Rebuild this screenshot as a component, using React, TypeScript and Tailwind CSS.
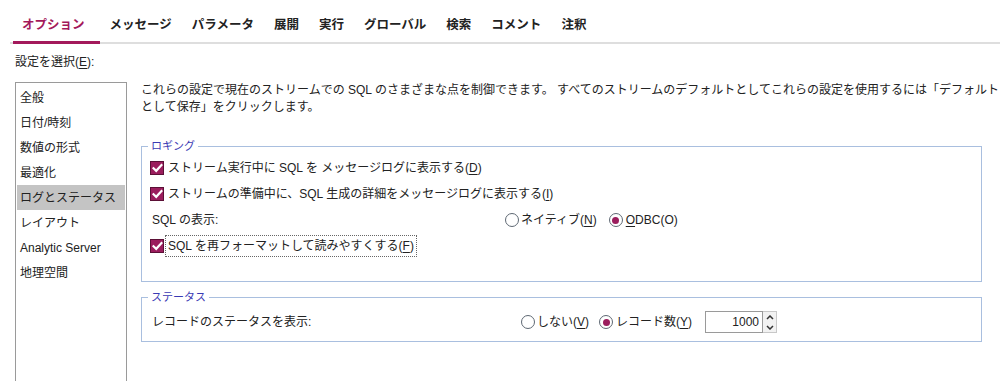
import React from 'react';

const FONT = '"Liberation Sans", "Noto Sans CJK JP", sans-serif';

const tabs = ['オプション', 'メッセージ', 'パラメータ', '展開', '実行', 'グローバル', '検索', 'コメント', '注釈'];

const categories = ['全般', '日付/時刻', '数値の形式', '最適化', 'ログとステータス', 'レイアウト', 'Analytic Server', '地理空間'];

function CheckBox() {
  return (
    <span className="flex h-[14px] w-[14px] shrink-0 items-center justify-center border border-[#5b1036] bg-[#9b1d5d]">
      <svg width="11" height="10" viewBox="0 0 11 10">
        <path d="M1.5 5.2 L4.2 7.8 L9.5 2" fill="none" stroke="white" strokeWidth="2.2" strokeLinecap="square" />
      </svg>
    </span>
  );
}

function Radio({ checked }: { checked?: boolean }) {
  return (
    <span className="flex h-[14px] w-[14px] shrink-0 items-center justify-center rounded-full border border-[#5e6873] bg-white">
      {checked && <span className="h-[7px] w-[7px] rounded-full bg-[#9b1d5d]" />}
    </span>
  );
}

// text with an underlined access key
function Key({ before, k, after }: { before?: string; k: string; after?: string }) {
  return (
    <span>
      {before}
      <span className="underline underline-offset-2">{k}</span>
      {after}
    </span>
  );
}

function Legend({ className, children }: { className?: string; children: React.ReactNode }) {
  return <legend className={`px-[3px] text-[11px] leading-[14px] text-[#3a3ab4] ${className ?? ''}`}>{children}</legend>;
}

export default function App() {
  return (
    <div className="h-[381px] w-[1000px] overflow-hidden bg-white text-[12px] text-[#222]" style={{ fontFamily: FONT }}>
      {/* Tabs */}
      <header className="ml-[10px] flex h-[44px] items-end border-b-2 border-[#dedede] pl-[3px]">
        {tabs.map((t, i) =>
          i === 0 ? (
            <div key={t} className="-mb-[2px] h-[44px] border-b-[3px] border-[#a3195b] pl-[9px] pr-[15px] pt-[17px] text-[12.5px] font-bold leading-[16px] text-[#a3195b]">
              {t}
            </div>
          ) : (
            <div key={t} className="h-[42px] px-[10px] pt-[17px] text-[12.5px] font-bold leading-[16px]">
              {t}
            </div>
          )
        )}
      </header>

      <div className="px-[15px]">
        <div className="mt-[10px] leading-[16px]">
          <Key before="設定を選択(" k="E" after="):" />
        </div>

        <div className="mt-[12px] flex gap-[14px]">
          {/* Category list */}
          <div className="h-[320px] w-[112px] shrink-0 border border-[#9a9a9a] px-px pt-[2px]">
            {categories.map((c) => (
              <div
                key={c}
                className={`flex h-[25px] items-center pl-[3px] text-[12px] ${c === 'ログとステータス' ? 'bg-[#c4c4c4]' : ''}`}
              >
                {c}
              </div>
            ))}
          </div>

          {/* Settings panel */}
          <div className="w-[841px]">
            <p className="leading-[17px] whitespace-nowrap">
              これらの設定で現在のストリームでの SQL のさまざまな点を制御できます。 すべてのストリームのデフォルトとしてこれらの設定を使用するには「デフォルト
              <br />
              として保存」をクリックします。
            </p>

            <fieldset className="mt-[23px] border border-[#a9bfdf] px-[8px] pb-[22px] pt-[2px]">
              <Legend className="-ml-[2px]">ロギング</Legend>
              <div className="flex h-[26px] items-center gap-[4px]">
                <CheckBox />
                <Key before="ストリーム実行中に SQL を メッセージログに表示する(" k="D" after=")" />
              </div>
              <div className="flex h-[26px] items-center gap-[4px]">
                <CheckBox />
                <Key before="ストリームの準備中に、SQL 生成の詳細をメッセージログに表示する(" k="I" after=")" />
              </div>
              <div className="flex h-[26px] items-center">
                <span className="w-[355px] pl-[2px]">SQL の表示:</span>
                <span className="flex items-center gap-[2px]">
                  <Radio />
                  <Key before="ネイティブ(" k="N" after=")" />
                </span>
                <span className="ml-[12px] flex items-center gap-[3px]">
                  <Radio checked />
                  <Key k="O" after="DBC(O)" />
                </span>
              </div>
              <div className="flex h-[26px] items-center">
                <CheckBox />
                <span className="ml-px flex h-[22px] items-center border border-dotted border-[#666] px-[2px]">
                  <Key before="SQL を再フォーマットして読みやすくする(" k="F" after=")" />
                </span>
              </div>
            </fieldset>

            <fieldset className="mt-[8px] border border-[#a9bfdf] px-[10px] pb-[6px] pt-[5px]">
              <Legend className="-ml-[4px]">ステータス</Legend>
              <div className="flex h-[26px] items-center">
                <span className="w-[369px]">レコードのステータスを表示:</span>
                <span className="flex items-center gap-[2px]">
                  <Radio />
                  <Key before="しない(" k="V" after=")" />
                </span>
                <span className="ml-[10px] flex items-center gap-[3px]">
                  <Radio checked />
                  <Key before="レコード数(" k="Y" after=")" />
                </span>
                <div className="ml-[13px] flex h-[22px] items-stretch">
                  <div className="flex w-[58px] items-center justify-end border border-[#9a9a9a] bg-white pr-[3px]">1000</div>
                  <div className="flex w-[14px] flex-col border border-l-0 border-[#c8c8c8] bg-[#f2f2f2]">
                    <span className="flex flex-1 items-center justify-center">
                      <svg width="8" height="5" viewBox="0 0 8 5">
                        <path d="M1 4 L4 1 L7 4" fill="none" stroke="#333" strokeWidth="1.5" />
                      </svg>
                    </span>
                    <span className="flex flex-1 items-center justify-center">
                      <svg width="8" height="5" viewBox="0 0 8 5">
                        <path d="M1 1 L4 4 L7 1" fill="none" stroke="#333" strokeWidth="1.5" />
                      </svg>
                    </span>
                  </div>
                </div>
              </div>
            </fieldset>
          </div>
        </div>
      </div>
    </div>
  );
}
